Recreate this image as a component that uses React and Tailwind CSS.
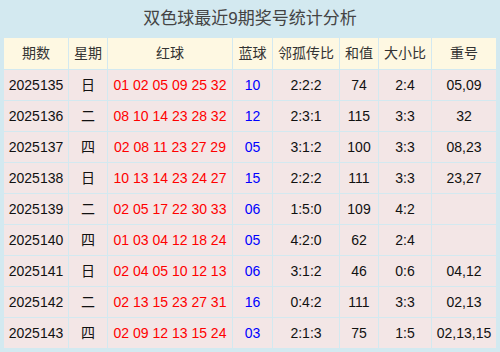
const rows = [
  ['2025135', '日', '01 02 05 09 25 32', '10', '2:2:2', '74', '2:4', '05,09'],
  ['2025136', '二', '08 10 14 23 28 32', '12', '2:3:1', '115', '3:3', '32'],
  ['2025137', '四', '02 08 11 23 27 29', '05', '3:1:2', '100', '3:3', '08,23'],
  ['2025138', '日', '10 13 14 23 24 27', '15', '2:2:2', '111', '3:3', '23,27'],
  ['2025139', '二', '02 05 17 22 30 33', '06', '1:5:0', '109', '4:2', ''],
  ['2025140', '四', '01 03 04 12 18 24', '05', '4:2:0', '62', '2:4', ''],
  ['2025141', '日', '02 04 05 10 12 13', '06', '3:1:2', '46', '0:6', '04,12'],
  ['2025142', '二', '02 13 15 23 27 31', '16', '0:4:2', '111', '3:3', '02,13'],
  ['2025143', '四', '02 09 12 13 15 24', '03', '2:1:3', '75', '1:5', '02,13,15'],
]

const headers = ['期数', '星期', '红球', '蓝球', '邻孤传比', '和值', '大小比', '重号']

export default function App() {
  return (
    <div
      className="w-[500px] h-[352px] bg-[#d3e9f0] px-1 pb-1"
      style={{ fontFamily: '"Liberation Sans", "Noto Sans CJK SC", sans-serif' }}
    >
      <div className="h-[38px] flex items-center justify-center text-[17px] text-[#444]">
        双色球最近9期奖号统计分析
      </div>
      <div className="grid grid-cols-[64px_38px_124px_39px_66px_38px_52px_64px] gap-px text-[14px]">
        {headers.map((h) => (
          <div key={h} className="h-[31px] flex items-center justify-center bg-[#fef8e2] text-[#333]">
            {h}
          </div>
        ))}
        {rows.map((r) =>
          r.map((cell, i) => (
            <div
              key={r[0] + i}
              className={
                'h-[30px] flex items-center justify-center bg-[#f3e6e6] ' +
                (i === 2 ? 'text-[#ff0000]' : i === 3 ? 'text-[#0000ff]' : 'text-[#111]')
              }
            >
              {cell}
            </div>
          ))
        )}
      </div>
    </div>
  )
}
